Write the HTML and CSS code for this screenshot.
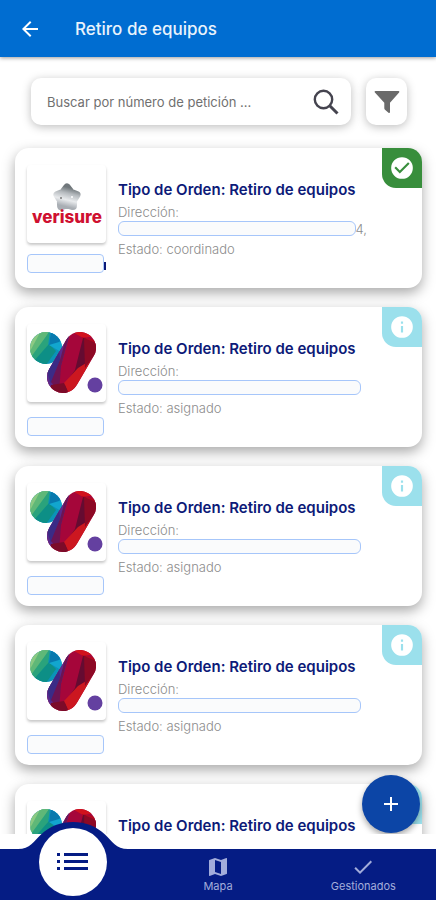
FILE: index.html
```html
<!DOCTYPE html>
<html lang="es">
<head>
<meta charset="utf-8">
<meta name="viewport" content="width=device-width, initial-scale=1">
<title>Retiro de equipos</title>
<link rel="stylesheet" href="styles.css">
</head>
<body>
<svg class="defs" aria-hidden="true">
  <defs>
    <clipPath id="ball"><circle cx="19" cy="24" r="16"/></clipPath>
    <clipPath id="pill"><path d="M39.2 15.9A16 16 0 0 1 66.8 32.1L49.8 61.1A16 16 0 0 1 22.2 44.9Z"/></clipPath>
    <linearGradient id="steel" x1="0.6" y1="0" x2="0.35" y2="1">
      <stop offset="0" stop-color="#70777b"/><stop offset="0.3" stop-color="#b4b9bd"/><stop offset="0.65" stop-color="#e9ebed"/><stop offset="1" stop-color="#a9aeb4"/>
    </linearGradient>
    <symbol id="brand" viewBox="0 0 80 78">
      <g clip-path="url(#ball)">
        <path fill="#0b93b8" d="M0 5h40v40H0z"/>
        <path fill="#8cc983" d="M0 5h23L3 34z"/>
        <path fill="#5fb878" d="M15 5h9L5 36l-4-5z"/>
        <path fill="#2aa37c" d="M23 7 4 33l5 5 12-16z"/>
        <path fill="#0d8f86" d="M22 20 7 37l12 4 10-14z"/>
        <path fill="#12a6ce" d="M24 7l-2 14 14 8V15z"/>
        <path fill="#0879ae" d="M24 7l12 8-4 3-10 3z"/>
      </g>
      <g clip-path="url(#pill)">
        <path fill="#a5063a" d="M18 6h54v66H18z"/>
        <path fill="#5a2a8c" d="M18 6h26l-4 14-7 25-7 19-8-4z"/>
        <path fill="#3b2b86" d="M18 42l14-18 1 12-9 24z"/>
        <path fill="#6b1454" d="M43 8l-9 34-2 26-8-10 9-22 6-22z"/>
        <path fill="#d1121d" d="M42 6l14 8 13-2-3-6z"/>
        <path fill="#b4081f" d="M55 13l14 3v10l-14-6z"/>
        <path fill="#650b31" d="M56 14l2 0 8 12-12 20-16 24-4-4 14-20z"/>
        <path fill="#cc1720" d="M51 44l-14 15 5 11 12-13 10-21z"/>
        <path fill="#8d0925" d="M57 14l12 5v10L58 44z"/>
        <path fill="#7c0b29" d="M24 61l13-2 5 11H24z"/>
      </g>
      <circle cx="68" cy="61" r="7.5" fill="#6440a0"/>
    </symbol>
    <symbol id="info" viewBox="0 0 24 24">
      <path fill="#fff" d="M12 2a10 10 0 1 0 0 20 10 10 0 0 0 0-20zm1 15h-2v-6h2v6zm0-8h-2V7h2v2z"/>
    </symbol>
    <symbol id="done" viewBox="0 0 24 24">
      <path fill="#fff" d="M12 2a10 10 0 1 0 0 20 10 10 0 0 0 0-20zm-2 15-5-5 1.4-1.4 3.6 3.6 7.6-7.6L19 8l-9 9z"/>
    </symbol>
  </defs>
</svg>
<div class="app">
  <header class="topbar">
    <button class="back" aria-label="Volver">
      <svg width="24" height="24" viewBox="0 0 24 24"><path fill="#fff" d="M20 11H7.8l5.6-5.6L12 4l-8 8 8 8 1.4-1.4L7.8 13H20z"/></svg>
    </button>
    <h1>Retiro de equipos</h1>
  </header>

  <form class="tools" role="search">
    <div class="search">
      <input type="text" aria-label="Buscar por número de petición" placeholder="Buscar por número de petición ...">
      <button type="button" aria-label="Buscar">
        <svg width="26" height="26" viewBox="0 0 26 26"><circle cx="10.5" cy="10.5" r="8.7" fill="none" stroke="#45444f" stroke-width="2.4"/><path d="M17 17l7.500 7.500" stroke="#45444f" stroke-width="3"/></svg>
      </button>
    </div>
    <button type="button" class="filter" aria-label="Filtrar">
      <svg width="26" height="24" viewBox="0 0 26 24"><path fill="#6a6a6a" d="M1.500 1h23c1 0 1 1 .6 1.600L16 12.800V22c0 1-.8 1.200-1.500.7l-3.500-3c-.5-.4-.7-.8-.7-1.400v-5.500L.9 2.600C.4 2 .5 1 1.500 1z"/></svg>
    </button>
  </form>

  <main class="list">
    <article class="card card-done">
      <div class="side">
        <div class="thumb">
          <svg width="80" height="78" viewBox="0 0 80 78" role="img" aria-label="verisure">
            <path fill="url(#steel)" stroke="url(#steel)" stroke-width="8" stroke-linejoin="round" d="M40 22.500l3.800 5.200 5.700 2.200-3.300 5.100-.3 6.100-5.900-1.600-5.900 1.600-.3-6.100-3.300-5.100 5.700-2.200z"/>
            <circle cx="34" cy="33" r="1" fill="#777"/><circle cx="45" cy="32" r="1" fill="#fff"/>
            <text class="verisure" x="40" y="58" text-anchor="middle">verisure</text>
          </svg>
        </div>
        <div class="code"></div>
      </div>
      <div class="info">
        <h2>Tipo de Orden: Retiro de equipos</h2>
        <p>Dirección:</p>
        <div class="address"><span class="mask"></span><span class="rest">4,</span></div>
        <p>Estado: coordinado</p>
      </div>
      <span class="badge badge-done"><svg width="26" height="26"><use href="#done"/></svg></span>
    </article>

    <article class="card">
      <div class="side">
        <div class="thumb"><svg width="80" height="78"><use href="#brand"/></svg></div>
        <div class="code"></div>
      </div>
      <div class="info">
        <h2>Tipo de Orden: Retiro de equipos</h2>
        <p>Dirección:</p>
        <div class="address"><span class="mask"></span></div>
        <p>Estado: asignado</p>
      </div>
      <span class="badge"><svg width="26" height="26"><use href="#info"/></svg></span>
    </article>

    <article class="card">
      <div class="side">
        <div class="thumb"><svg width="80" height="78"><use href="#brand"/></svg></div>
        <div class="code"></div>
      </div>
      <div class="info">
        <h2>Tipo de Orden: Retiro de equipos</h2>
        <p>Dirección:</p>
        <div class="address"><span class="mask"></span></div>
        <p>Estado: asignado</p>
      </div>
      <span class="badge"><svg width="26" height="26"><use href="#info"/></svg></span>
    </article>

    <article class="card">
      <div class="side">
        <div class="thumb"><svg width="80" height="78"><use href="#brand"/></svg></div>
        <div class="code"></div>
      </div>
      <div class="info">
        <h2>Tipo de Orden: Retiro de equipos</h2>
        <p>Dirección:</p>
        <div class="address"><span class="mask"></span></div>
        <p>Estado: asignado</p>
      </div>
      <span class="badge"><svg width="26" height="26"><use href="#info"/></svg></span>
    </article>

    <article class="card">
      <div class="side">
        <div class="thumb"><svg width="80" height="78"><use href="#brand"/></svg></div>
      </div>
      <div class="info">
        <h2>Tipo de Orden: Retiro de equipos</h2>
      </div>
      <span class="badge"><svg width="26" height="26"><use href="#info"/></svg></span>
    </article>
  </main>

  <button class="fab" aria-label="Agregar">
    <svg width="24" height="24" viewBox="0 0 24 24"><path fill="#fff" d="M19 13h-6v6h-2v-6H5v-2h6V5h2v6h6z"/></svg>
  </button>

  <nav class="tabs">
    <svg class="bump" width="110" height="30" viewBox="0 0 110 30" aria-hidden="true"><path fill="#051c84" d="M0 30v-3C12 27 16 19 23 12.500 32 4 43 0 55 0s23 4 32 12.500c7 6.500 11 14.500 23 14.500v3z"/></svg>
    <a class="tab tab-current" href="#lista" aria-label="Lista">
      <span class="disc">
        <svg width="32" height="20" viewBox="0 0 32 20"><path fill="#051c84" d="M0 1h3v3H0zM0 8h3v3H0zM0 15h3v3H0zM7 1h24v3H7zM7 8h24v3H7zM7 15h24v3H7z"/></svg>
      </span>
    </a>
    <a class="tab" href="#mapa">
      <svg width="24" height="24" viewBox="0 0 24 24"><path fill="currentColor" d="M20.500 3l-.16.03L15 5.100 9 3 3.360 4.900c-.21.07-.36.25-.36.48V20.500c0 .28.22.5.5.5l.16-.03L9 18.900l6 2.100 5.640-1.900c.21-.07.36-.25.36-.48V3.500c0-.28-.22-.5-.5-.5zM15 19l-6-2.110V5l6 2.110V19z"/></svg>
      <span>Mapa</span>
    </a>
    <a class="tab" href="#gestionados">
      <svg width="24" height="24" viewBox="0 0 24 24"><path fill="currentColor" d="M9 16.200 4.800 12l-1.400 1.400L9 19 21 7l-1.400-1.400z"/></svg>
      <span>Gestionados</span>
    </a>
  </nav>
</div>
</body>
</html>
```
FILE: styles.css
```css
* {
  box-sizing: border-box;
}

body {
  margin: 0;
  background: #fff;
  font-family: Inter, "Open Sans", sans-serif;
}

button {
  display: grid;
  place-items: center;
  padding: 0;
  border: 0;
  background: none;
}

svg {
  display: block;
}

.defs {
  position: absolute;
  width: 0;
  height: 0;
}

.app {
  position: relative;
  display: flex;
  flex-direction: column;
  height: 100vh;
  overflow: hidden;
}

.topbar {
  display: flex;
  flex: none;
  align-items: center;
  gap: 33px;
  height: 57px;
  padding: 0 18px;
  background: #006dd1;
  box-shadow: 0 1px 4px rgba(0, 0, 0, 0.4);
}

.topbar h1 {
  margin: 0;
  color: #e9f3fc;
  font-size: 17px;
  font-weight: 500;
}

.tools {
  display: flex;
  flex: none;
  gap: 15px;
  padding: 21px 29px 13px 31px;
}

.search {
  display: flex;
  flex: 1;
  align-items: center;
  height: 47px;
  padding: 0 12px 0 16px;
  border-radius: 10px;
  background: #fff;
  box-shadow: 0 2px 10px rgba(0, 0, 0, 0.26);
}

.search input {
  flex: 1;
  min-width: 0;
  padding: 0;
  border: 0;
  outline: 0;
  background: none;
  font: 13px Inter, sans-serif;
}

.search input::placeholder {
  color: #707070;
}

.filter {
  width: 41px;
  height: 47px;
  border-radius: 10px;
  background: #fff;
  box-shadow: 0 2px 10px rgba(0, 0, 0, 0.26);
}

.list {
  display: flex;
  flex: 1;
  flex-direction: column;
  gap: 19px;
  min-height: 0;
  padding: 10px 14px 0 15px;
  overflow: hidden;
}

.card {
  position: relative;
  display: flex;
  flex: none;
  gap: 12px;
  height: 140px;
  padding: 17px 12px 0;
  border-radius: 14px;
  background: #fff;
  box-shadow: 0 5px 13px rgba(0, 0, 0, 0.34);
}

.side {
  display: flex;
  flex: none;
  flex-direction: column;
  gap: 15px;
  width: 79px;
}

.card-done .side {
  gap: 11px;
}

.thumb {
  height: 78px;
  border-radius: 4px;
  box-shadow: 0 2px 3px rgba(0, 0, 0, 0.22);
}

.verisure {
  fill: #cf1030;
  font: 800 17px Inter, sans-serif;
}

.code {
  position: relative;
  width: 77px;
  height: 19px;
  border: 1px solid #a6c6fa;
  border-radius: 4px;
  background: #fafbfc;
}

.card-done .code::after {
  content: "";
  position: absolute;
  top: 7px;
  left: 76px;
  width: 2px;
  height: 8px;
  background: #0c1a78;
}

.info {
  flex: 1;
  min-width: 0;
  padding-top: 15px;
}

.info h2 {
  margin: 0 0 3px;
  color: #0c1a78;
  font-size: 15px;
  font-weight: 600;
  line-height: 20px;
  white-space: nowrap;
}

.info p {
  margin: 0;
  color: #8c8c8c;
  font-size: 13px;
  font-weight: 300;
  line-height: 18px;
}

.address {
  display: flex;
  align-items: center;
  width: 249px;
  height: 15px;
  margin-bottom: 4px;
}

.mask {
  flex: 1;
  max-width: 243px;
  height: 15px;
  border: 1px solid #a6c6fa;
  border-radius: 6px;
  background: #fafbfc;
}

.rest {
  color: #8c8c8c;
  font-size: 13px;
  font-weight: 300;
}

.badge {
  position: absolute;
  top: 0;
  right: 0;
  display: grid;
  place-items: center;
  width: 40px;
  height: 40px;
  border-radius: 0 14px;
  background: #9be0ec;
}

.badge-done {
  background: #388e3c;
}

.fab {
  position: absolute;
  right: 16px;
  bottom: 67px;
  width: 58px;
  height: 58px;
  border-radius: 50%;
  background: #0c45a6;
  box-shadow: 0 3px 6px rgba(0, 0, 0, 0.35);
}

.tabs {
  position: relative;
  display: grid;
  flex: none;
  grid-template-columns: repeat(3, 1fr);
  height: 66px;
  border-top: 15px solid #fff;
  background: #051c84;
}

.bump {
  position: absolute;
  top: -27px;
  left: 18px;
}

.tab {
  display: flex;
  flex-direction: column;
  align-items: center;
  padding-top: 6px;
  color: #a3addb;
  font-size: 11px;
  line-height: 14px;
  text-decoration: none;
}

.tab-current {
  position: relative;
}

.disc {
  position: absolute;
  top: -21px;
  display: grid;
  place-items: center;
  width: 68px;
  height: 68px;
  border-radius: 50%;
  background: #fff;
}
```
